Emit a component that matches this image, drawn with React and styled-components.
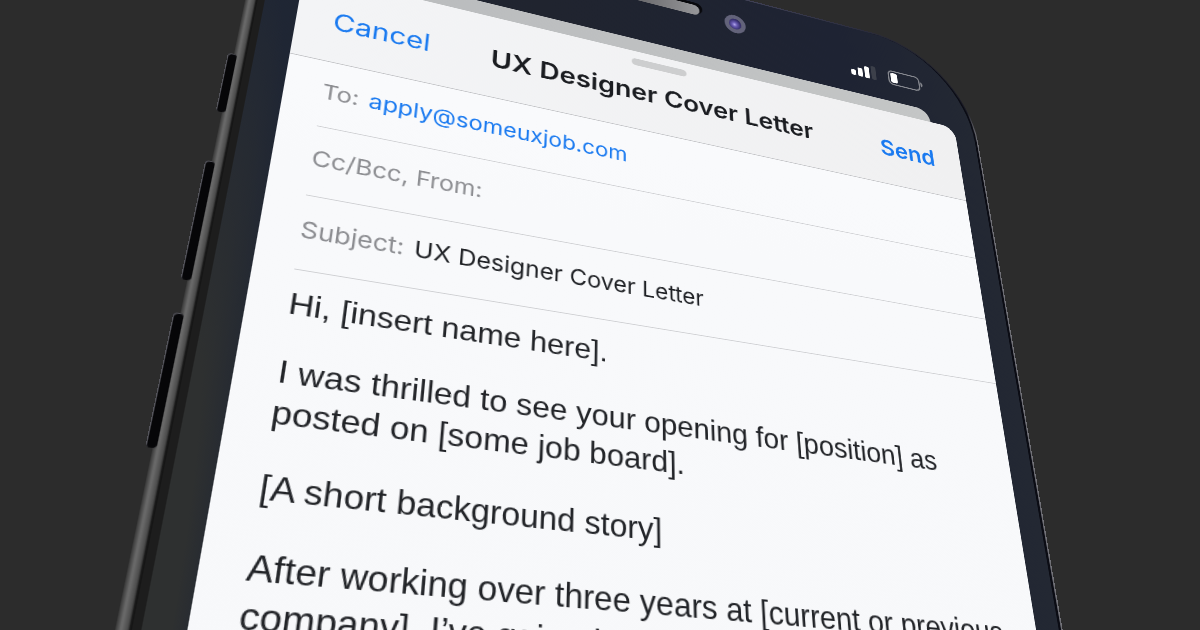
import React, { useState } from 'react';
import styled, { createGlobalStyle } from 'styled-components';

const GlobalStyle = createGlobalStyle`
  body {
    margin: 0;
    background: #2c2c2c;
  }
`;

const Scene = styled.main`
  display: flex;
  justify-content: center;
  height: 100vh;
  overflow: hidden;
  background: #2c2c2c;
  font-family: Inter, 'Liberation Sans', sans-serif;
`;

// The phone is laid out flat and tilted as one piece.
const Phone = styled.div`
  position: relative;
  flex: none;
  box-sizing: border-box;
  width: 914px;
  min-height: 1100px;
  padding: 2px 2px 0 19px;
  border-radius: 132px 146px 0 0;
  background: linear-gradient(
    to right,
    #3a3a3a 0,
    #6c6c6c 4px,
    #4a4a4a 9px,
    #0c0c0c 11px,
    #1d1d1d 12px,
    #1d1d1d 19px,
    #1a1b26 60px,
    #4a4b62 500px,
    #1a1b26 905px,
    #77777d 914px
  );
  transform-origin: 0 0;
  transform: matrix3d(
    1.02607, 0.22939, 0, 0.00025235,
    -0.19027, 0.72787, 0, -0.0003907,
    0, 0, 1, 0,
    138.65, -135.6, 0, 1.08196
  );
`;

const Rail = styled.div`
  position: absolute;
  top: 259px;
  left: -6px;
  display: flex;
  flex-direction: column;
`;

const SideKey = styled.span`
  width: 9px;
  height: ${props => props.$height}px;
  margin-bottom: ${props => props.$gap}px;
  border-radius: 4px;
  background: #060608;
  box-shadow: inset 1px 1px 0 #55555c;
`;

const Glass = styled.div`
  box-sizing: border-box;
  min-height: 1098px;
  padding: 30px 29px 0 34px;
  border-radius: 114px 144px 0 0;
  border-right: 3px solid #0b0c14;
  background:
    radial-gradient(ellipse 56px 760px at 0 900px, #2e3030 40%, rgba(46, 48, 48, 0) 100%),
    linear-gradient(to right, #1f2634, #20242f 300px, #1e2333 700px, #232833 100%);
`;

const StatusBar = styled.div`
  display: grid;
  grid-template-columns: 1fr auto 1fr;
  height: 78px;
`;

const Notch = styled.div`
  display: flex;
  gap: 34px;
  padding-left: 66px;
`;

const Speaker = styled.span`
  width: 108px;
  height: 16px;
  border-radius: 8px;
  background: linear-gradient(to right, #5b5b5e, #97979a);
  box-shadow: 3px -3px 0 1px #08080c;
`;

const Camera = styled.span`
  width: 17px;
  height: 17px;
  border: 6px solid #63637a;
  border-radius: 50%;
  background: radial-gradient(circle at 45% 55%, #b3a8ee 0, #6a5cb4 25%, #37306e 60%, #262347 100%);
`;

const Indicators = styled.div`
  display: flex;
  align-items: end;
  justify-content: end;
  gap: 18px;
  padding: 0 40px 28px 0;
`;

const BackCard = styled.div`
  height: 19px;
  margin: 0 36px;
  border-radius: 20px 20px 0 0;
  background: linear-gradient(to right, #b9bbbd, #c4c6c6);
`;

const Sheet = styled.form`
  min-height: 900px;
  border-radius: 20px 20px 0 0;
  background: linear-gradient(to bottom, #fafbfd, #f8f9fb 260px, #f7f8fa);
`;

const Header = styled.header`
  position: relative;
  display: grid;
  grid-template-columns: 1fr auto 1fr;
  align-items: end;
  box-sizing: border-box;
  height: 114px;
  padding: 0 38px 34px;
  border-bottom: 1px solid #c2c3c6;
  border-radius: 20px 20px 0 0;
  background: linear-gradient(to right, #f3f4f6, #f0f0f1);
`;

const Grabber = styled.span`
  position: absolute;
  top: 11px;
  left: 50%;
  width: 70px;
  height: 10px;
  margin-left: -35px;
  border-radius: 5px;
  background: #cdcecf;
`;

const Title = styled.h1`
  margin: 0;
  color: #1b1d21;
  font-size: 33px;
  font-weight: 600;
  line-height: 40px;
`;

const HeaderButton = styled.button`
  justify-self: ${props => props.$side};
  padding: 0;
  border: none;
  background: none;
  color: #1a7af0;
  font-family: inherit;
  font-size: 32px;
  font-weight: ${props => props.$strong ? 600 : 400};
  line-height: 40px;
  cursor: pointer;
`;

const Field = styled.div`
  display: flex;
  align-items: center;
  gap: 10px;
  box-sizing: border-box;
  height: 84px;
  margin-left: 38px;
  padding-bottom: 6px;
  border-bottom: 1px solid #cfd0d3;
`;

const Label = styled.label`
  color: #8d8e92;
  font-size: 26px;
  line-height: 32px;
`;

const Input = styled.input`
  flex: 1;
  min-width: 0;
  height: 32px;
  padding: 0;
  border: none;
  outline: none;
  background: transparent;
  color: ${props => props.$link ? '#1a7af0' : '#1f2125'};
  font-family: inherit;
  font-size: 26px;
`;

const Letter = styled.article`
  padding: 16px 38px;
  color: #222428;
  font-family: 'Liberation Sans', Arial, sans-serif;
  font-size: 32px;
  line-height: 40px;
`;

const Paragraph = styled.p`
  margin: 0 0 30px;
`;

const SignalIcon = () => (
  <svg width="37" height="23" viewBox="0 0 37 23" aria-hidden="true">
    <rect x="0" y="13" width="7" height="9" rx="2" fill="#fff" />
    <rect x="10" y="8" width="7" height="14" rx="2" fill="#fff" />
    <rect x="20" y="3" width="7" height="19" rx="2" fill="#fff" />
    <rect x="30" y="0" width="7" height="22" rx="2" fill="#3c404a" />
  </svg>
);

const BatteryIcon = () => (
  <svg width="52" height="24" viewBox="0 0 52 24" aria-hidden="true">
    <rect x="1" y="1" width="46" height="22" rx="6" fill="none" stroke="#85878e" strokeWidth="2" />
    <rect x="4" y="4" width="10" height="16" rx="3" fill="#fff" />
    <path d="M49 8c2 .8 3 2.200 3 4s-1 3.200-3 4z" fill="#85878e" />
  </svg>
);

const paragraphs = [
  'Hi, [insert name here].',
  'I was thrilled to see your opening for [position] as posted on [some job board].',
  '[A short background story]',
  'After working over three years at [current or previous company], I’ve gained',
];

const App = () => {
  const [to, setTo] = useState('apply@someuxjob.com');
  const [cc, setCc] = useState('');
  const [subject, setSubject] = useState('UX Designer Cover Letter');

  return (
    <Scene>
      <GlobalStyle />
      <Phone>
        <Rail>
          <SideKey $height={74} $gap={59} />
          <SideKey $height={132} $gap={34} />
          <SideKey $height={129} $gap={0} />
        </Rail>
        <Glass>
          <StatusBar>
            <span />
            <Notch>
              <Speaker />
              <Camera />
            </Notch>
            <Indicators>
              <SignalIcon />
              <BatteryIcon />
            </Indicators>
          </StatusBar>
          <BackCard />
          <Sheet onSubmit={(e) => e.preventDefault()}>
            <Header>
              <Grabber />
              <HeaderButton type="button" $side="start">Cancel</HeaderButton>
              <Title>UX Designer Cover Letter</Title>
              <HeaderButton type="submit" $side="end" $strong>Send</HeaderButton>
            </Header>
            <Field>
              <Label htmlFor="to">To:</Label>
              <Input id="to" $link value={to} onChange={(e) => setTo(e.target.value)} />
            </Field>
            <Field>
              <Label htmlFor="cc">Cc/Bcc, From:</Label>
              <Input id="cc" value={cc} onChange={(e) => setCc(e.target.value)} />
            </Field>
            <Field>
              <Label htmlFor="subject">Subject:</Label>
              <Input id="subject" value={subject} onChange={(e) => setSubject(e.target.value)} />
            </Field>
            <Letter>
              {paragraphs.map((text) => (
                <Paragraph key={text}>{text}</Paragraph>
              ))}
            </Letter>
          </Sheet>
        </Glass>
      </Phone>
    </Scene>
  );
};

export default App;
